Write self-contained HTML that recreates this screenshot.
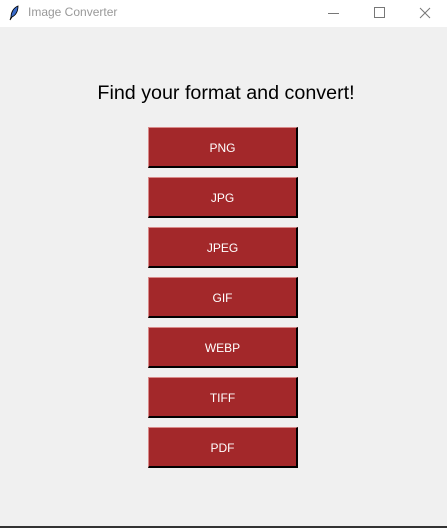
<!DOCTYPE html>
<html><head><style>
body{margin:0;width:447px;height:528px;background:#f0f0f0;position:relative;overflow:hidden;font-family:"Liberation Sans",sans-serif}
.tb{position:absolute;left:0;top:0;width:447px;height:27px;background:#fff}
.tt{position:absolute;left:28px;top:5px;font-size:12px;color:#999}
.h{position:absolute;left:0;width:452px;top:82px;text-align:center;font-size:19.7px;color:#000}
.b{position:absolute;left:148px;width:147px;height:38px;background:#a3282a;border-top:1px solid #d98a8a;border-left:1px solid #d98a8a;border-right:2px solid #000;border-bottom:2px solid #000;color:#fff;font-size:12px;text-align:center;line-height:40px}
.bot{position:absolute;left:0;top:526px;width:447px;height:2px;background:#333}
</style></head><body>
<div class="tb">
<svg style="position:absolute;left:8px;top:5px" width="12" height="16" viewBox="0 0 12 16"><path d="M10 1 C5 3 3 8 3 12 L2 15 L4 12 C8 10 10 6 10 1Z" fill="#3a6bc8" stroke="#000" stroke-width="0.8"/></svg>
<div class="tt">Image Converter</div>
<svg style="position:absolute;left:328px;top:5px" width="110" height="16"><line x1="0" y1="8.5" x2="11" y2="8.5" stroke="#777"/><rect x="46.5" y="2.5" width="10" height="10" fill="none" stroke="#777"/><path d="M92 3 L102 13 M102 3 L92 13" stroke="#777"/></svg>
</div>
<div class="h">Find your format and convert!</div>
<div class="b" style="top:127px">PNG</div>
<div class="b" style="top:177px">JPG</div>
<div class="b" style="top:227px">JPEG</div>
<div class="b" style="top:277px">GIF</div>
<div class="b" style="top:327px">WEBP</div>
<div class="b" style="top:377px">TIFF</div>
<div class="b" style="top:427px">PDF</div>
<div class="bot"></div>
</body></html>
